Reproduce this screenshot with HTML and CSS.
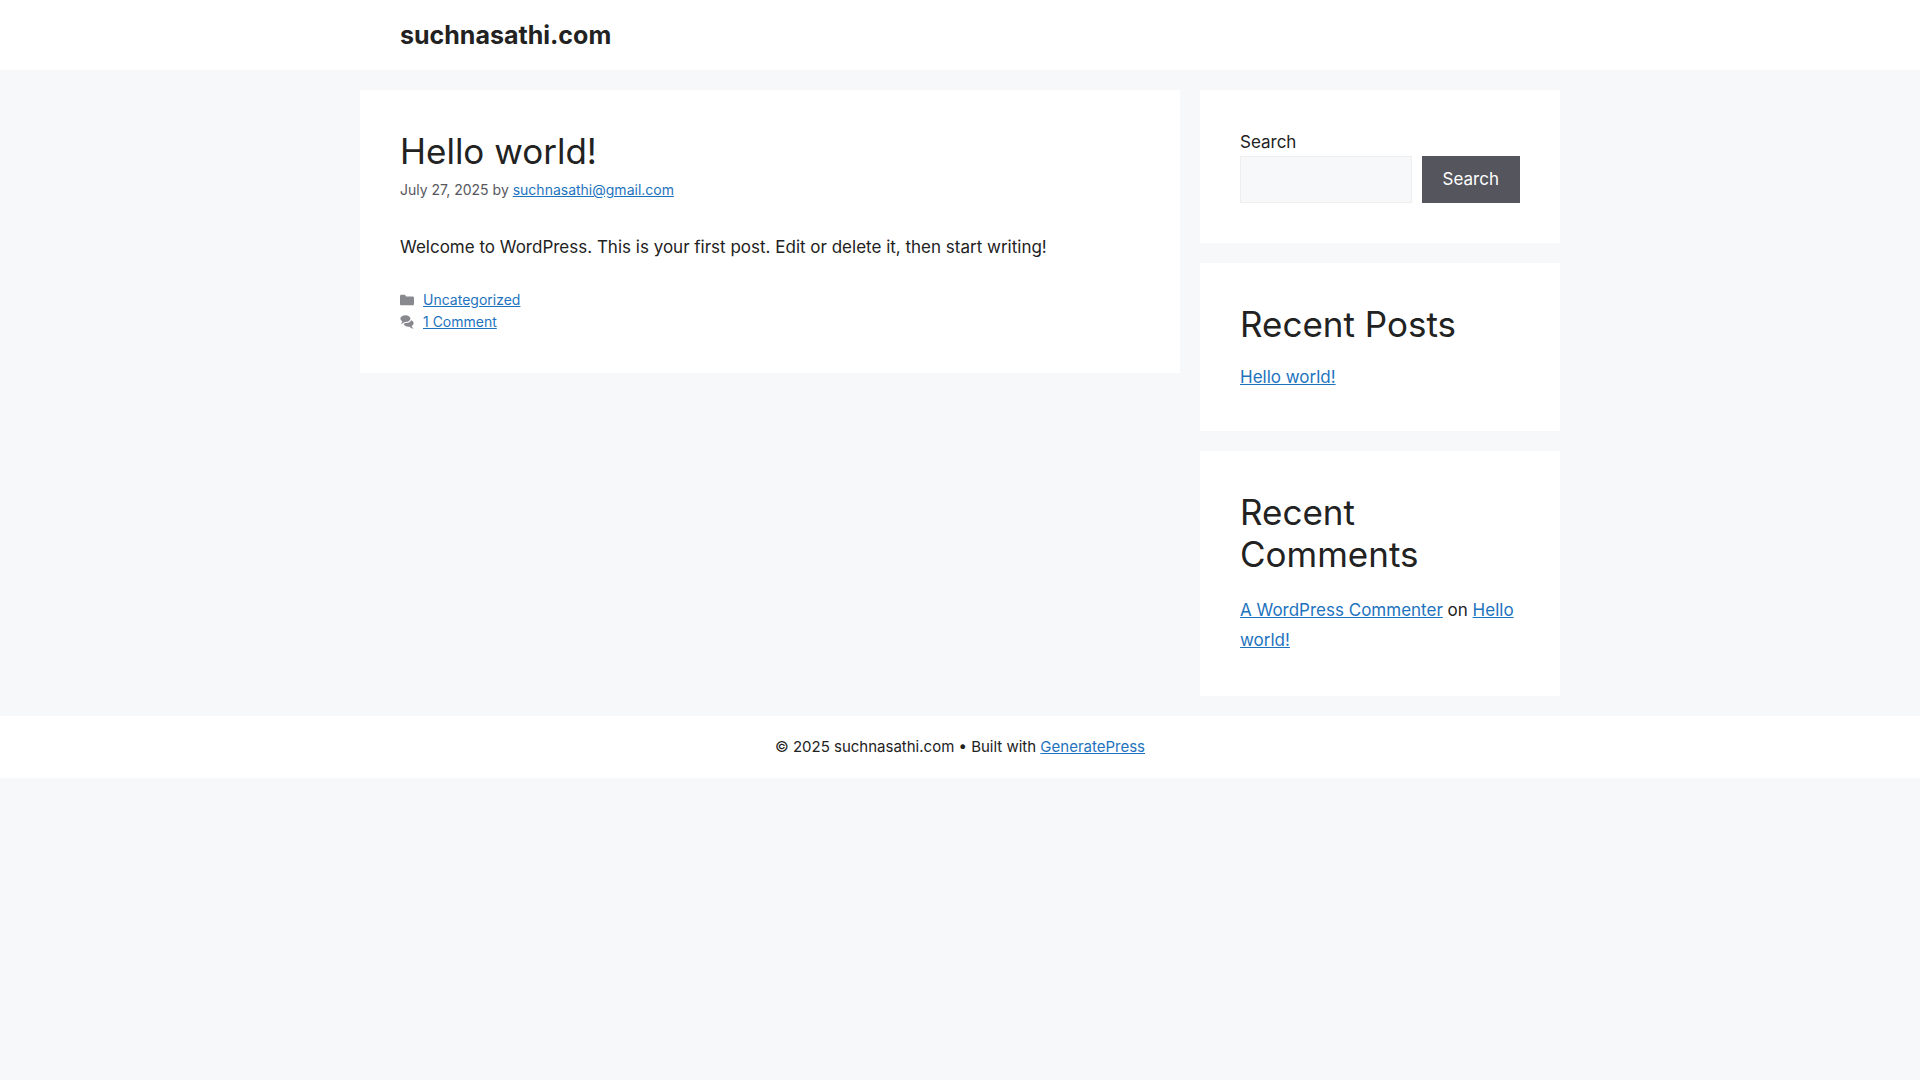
FILE: index.html
```html
<!DOCTYPE html>
<html lang="en-US">
  <head>
    <meta charset="UTF-8">
    <meta name="viewport" content="width=device-width, initial-scale=1">
    <title>suchnasathi.com</title>
    <link rel="stylesheet" href="styles.css">
  </head>
  <body>
    <header class="site-header">
      <div class="inside-header">
        <p class="main-title"><a href="#" rel="home">suchnasathi.com</a></p>
      </div>
    </header>

    <div class="site-content">
      <main class="site-main">
        <article class="post">
          <header class="entry-header">
            <h2 class="entry-title"><a href="#">Hello world!</a></h2>
            <div class="entry-meta">
              <time datetime="2025-07-27">July 27, 2025</time> by <a href="#">suchnasathi@gmail.com</a>
            </div>
          </header>
          <div class="entry-summary">
            <p>Welcome to WordPress. This is your first post. Edit or delete it, then start writing!</p>
          </div>
          <footer class="entry-footer">
            <span class="footer-item">
              <svg class="icon" viewBox="0 0 512 512" aria-hidden="true"><path d="M0 112c0-26.51 21.49-48 48-48h110.014a48 48 0 0 1 43.592 27.907l12.349 26.791A16 16 0 0 0 228.486 128H464c26.51 0 48 21.49 48 48v224c0 26.51-21.49 48-48 48H48c-26.51 0-48-21.49-48-48V112z"/></svg>
              <a href="#">Uncategorized</a>
            </span>
            <span class="footer-item">
              <svg class="icon" viewBox="0 0 512 512" aria-hidden="true"><path d="M132.838 329.973a435.298 435.298 0 0 0 16.769-9.004c13.363-7.574 26.587-16.142 37.419-25.507 7.544.597 15.27.925 23.098.925 54.905 0 105.634-15.311 143.285-41.28 23.728-16.365 43.115-37.692 54.155-62.645 54.739 22.205 91.498 63.272 91.498 110.286 0 42.186-29.558 79.498-75.09 102.828 23.46 49.216 75.09 101.709 75.09 101.709s-115.837-38.35-154.424-78.46c-9.956 1.12-20.297 1.758-30.793 1.758-88.727 0-162.927-43.071-181.007-100.61z"/><path d="M383.371 132.502c0 70.603-82.961 127.787-185.216 127.787-10.496 0-20.837-.639-30.793-1.757-38.587 40.093-154.424 78.429-154.424 78.429s51.63-52.472 75.09-101.67c-45.532-23.321-75.09-60.619-75.09-102.79C12.938 61.9 95.9 4.716 198.155 4.716 300.41 4.715 383.37 61.9 383.37 132.502z"/></svg>
              <a href="#">1 Comment</a>
            </span>
          </footer>
        </article>
      </main>

      <aside class="sidebar">
        <section class="widget">
          <form class="search-form" role="search">
            <label for="search">Search</label>
            <div class="search-row">
              <input class="search-input" id="search" type="search">
              <button class="search-button" type="submit">Search</button>
            </div>
          </form>
        </section>
        <section class="widget">
          <h2>Recent Posts</h2>
          <ul>
            <li><a href="#">Hello world!</a></li>
          </ul>
        </section>
        <section class="widget">
          <h2>Recent Comments</h2>
          <ol class="comments">
            <li><a href="#">A WordPress Commenter</a> on <a href="#">Hello world!</a></li>
          </ol>
        </section>
      </aside>
    </div>

    <footer class="site-info">
      &copy; 2025 suchnasathi.com &bull; Built with <a href="#">GeneratePress</a>
    </footer>
  </body>
</html>
```
FILE: styles.css
```css
* {
  box-sizing: border-box;
}

body {
  margin: 0;
  background: #f7f8f9;
  color: #222222;
  font-family: Inter, "Liberation Sans", sans-serif;
  font-size: 17px;
  line-height: 1.5;
}

p,
h2,
ul,
ol {
  margin: 0;
  padding: 0;
}

a {
  color: #1e73be;
}

h2 {
  margin-bottom: 20px;
  font-size: 35px;
  font-weight: 400;
  line-height: 1.2;
}

ul,
ol {
  list-style: none;
}

.site-header,
.site-info {
  background: #ffffff;
}

.inside-header {
  max-width: 1200px;
  margin: 0 auto;
  padding: 20px 40px;
}

.main-title {
  font-size: 25px;
  font-weight: 700;
  line-height: 30px;
}

.main-title a,
.entry-title a {
  color: #222222;
  text-decoration: none;
}

.site-content {
  display: flex;
  align-items: flex-start;
  gap: 20px;
  max-width: 1200px;
  margin: 0 auto;
  padding: 20px 0;
}

.site-main {
  flex: 1;
}

.post,
.widget {
  padding: 40px;
  background: #ffffff;
}

.entry-title {
  margin-bottom: 0;
}

.entry-meta,
.entry-footer {
  color: #575760;
  font-size: 14px;
  line-height: 22px;
}

.entry-meta {
  margin-top: 7px;
}

.entry-summary {
  margin-top: 34px;
}

.entry-footer {
  margin-top: 28px;
}

.footer-item {
  display: flex;
  align-items: center;
  gap: 9px;
}

.icon {
  width: 14px;
  height: 14px;
  fill: currentColor;
  opacity: 0.7;
}

.sidebar {
  display: flex;
  flex-direction: column;
  gap: 20px;
  width: 30%;
}

.search-form label {
  display: block;
}

.search-row {
  display: flex;
  gap: 10px;
}

.search-input {
  flex: 1;
  min-width: 0;
  padding: 10px 15px;
  border: 1px solid #eeeeee;
  border-radius: 0;
  background: #f7f8f9;
  font: inherit;
}

.search-button {
  padding: 10px 20px;
  border: 1px solid #55555e;
  background: #55555e;
  color: #ffffff;
  font: inherit;
  cursor: pointer;
}

.comments {
  line-height: 1.8;
}

.site-info {
  padding: 20px;
  font-size: 15px;
  line-height: 22px;
  text-align: center;
}

@media (max-width: 768px) {
  .site-content {
    flex-direction: column;
    align-items: stretch;
  }

  .sidebar {
    width: auto;
  }
}
```
